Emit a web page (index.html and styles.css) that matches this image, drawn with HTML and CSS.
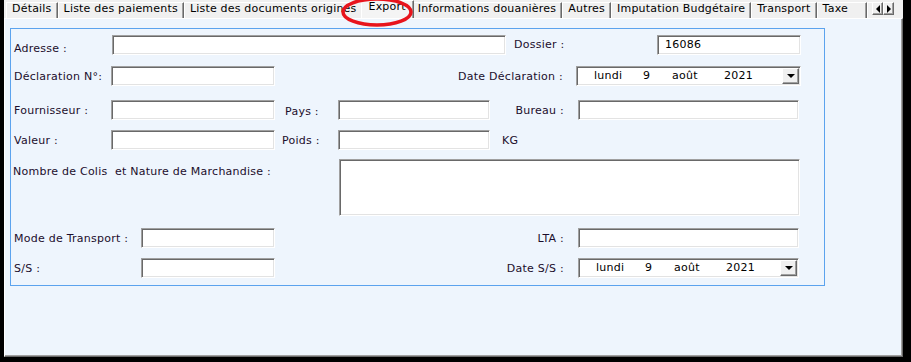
FILE: index.html
```html
<!DOCTYPE html>
<html lang="fr">
<head>
  <meta charset="UTF-8" />
  <title>Export</title>
  <link rel="stylesheet" href="styles.css">
</head>
<body>

  <div class="window">

    <div class="tabbar">
      <div class="tabs">
        <div class="tab">Détails</div>
        <div class="tab">Liste des paiements</div>
        <div class="tab">Liste des documents origines</div>
        <div class="tab active">Export</div>
        <div class="tab">Informations douanières</div>
        <div class="tab">Autres</div>
        <div class="tab">Imputation Budgétaire</div>
        <div class="tab">Transport</div>
        <div class="tab wide">Taxe</div>
        <div class="tab stub"></div>
      </div>
      <div class="scroller">
        <span class="arrow-btn"><span class="tri-left"></span></span>
        <span class="arrow-btn"><span class="tri-right"></span></span>
      </div>
      <!-- red annotation round the Export tab -->
      <svg class="mark" width="84" height="30" viewBox="0 0 84 30">
        <ellipse cx="39" cy="12" rx="34" ry="13" fill="none" stroke="#e8141c" stroke-width="3.5"/>
      </svg>
    </div>

    <div class="panel">
      <div class="group">

        <div class="row">
          <span class="lbl lbl-first lbl-low">Adresse :</span>
          <div class="field f-adresse"></div>
          <span class="lbl lbl-dossier">Dossier :</span>
          <div class="field f-dossier">16086</div>
        </div>

        <div class="row row-2">
          <span class="lbl lbl-first">Déclaration N°:</span>
          <div class="field f-short"></div>
          <span class="lbl lbl-right lbl-date">Date Déclaration :</span>
          <div class="field date date-wide">
            <span class="d-day">lundi</span>
            <span class="d-num">9</span>
            <span class="d-mon">août</span>
            <span>2021</span>
            <span class="drop"><span class="tri-down"></span></span>
          </div>
        </div>

        <div class="row row-3">
          <span class="lbl lbl-first">Fournisseur :</span>
          <div class="field f-short"></div>
          <span class="lbl lbl-pays">Pays :</span>
          <div class="field f-mid"></div>
          <span class="lbl lbl-right lbl-bureau">Bureau :</span>
          <div class="field f-long"></div>
        </div>

        <div class="row row-4">
          <span class="lbl lbl-first">Valeur :</span>
          <div class="field f-short"></div>
          <span class="lbl lbl-poids">Poids :</span>
          <div class="field f-mid"></div>
          <span class="lbl lbl-kg">KG</span>
        </div>

        <div class="row row-5">
          <span class="lbl lbl-colis">Nombre de Colis&nbsp; et Nature de Marchandise :</span>
          <div class="field f-area"></div>
        </div>

        <div class="row row-6">
          <span class="lbl lbl-mode">Mode de Transport :</span>
          <div class="field f-mode"></div>
          <span class="lbl lbl-right lbl-wide">LTA :</span>
          <div class="field f-long"></div>
        </div>

        <div class="row row-7">
          <span class="lbl lbl-mode">S/S :</span>
          <div class="field f-mode"></div>
          <span class="lbl lbl-right lbl-wide">Date S/S :</span>
          <div class="field date f-long">
            <span class="d-day">lundi</span>
            <span class="d-num">9</span>
            <span class="d-mon">août</span>
            <span>2021</span>
            <span class="drop"><span class="tri-down"></span></span>
          </div>
        </div>

      </div>
    </div>

  </div>

</body>
</html>
```

FILE: styles.css
```css
* {
  box-sizing: border-box;
}
html, body {
  margin: 0;
  padding: 0;
}
body {
  background-color: #000;
  font-family: "DejaVu Sans", Verdana, sans-serif;
  font-size: 11px;
  letter-spacing: 0.25px;
  color: #1c0e2c;
}
.window {
  width: 899px;
  height: 357px;
  margin-left: 4px;
  background-color: #f0f0f0;
  display: flex;
  flex-direction: column;
}

/* Tab strip */
.tabbar {
  position: relative;
  height: 18px;
  flex-shrink: 0;
  display: flex;
  align-items: flex-end;
}
.tabs {
  flex: 1;
  height: 18px;
  display: flex;
  align-items: flex-end;
  overflow: hidden;
  padding-left: 2px;
}
.tab {
  flex-shrink: 0;
  height: 16px;
  line-height: 12px;
  padding: 0 5px;
  border: 1px solid #fff;
  border-bottom: none;
  border-right-color: #696969;
  box-shadow: inset -1px 0 #a0a0a0;
  color: #000;
  letter-spacing: 0.2px;
  white-space: nowrap;
}
.tab.wide {
  padding-right: 18px;
}
.tab.stub {
  width: 40px;
}
.tab.active {
  position: relative;
  z-index: 1;
  height: 18px;
  line-height: 11px;
  margin: 0 -2px;
  padding: 0 7px;
  background-color: #f4f4f4;
}
.scroller {
  display: flex;
  align-self: flex-start;
  margin: 2px 9px 0 0;
}
.arrow-btn {
  width: 11px;
  height: 13px;
  background-color: #f0f0f0;
  border: 1px solid;
  border-color: #fff #696969 #696969 #fff;
  box-shadow: inset -1px -1px #a0a0a0;
  display: flex;
  align-items: center;
  justify-content: center;
}
.tri-left {
  border-right: 4px solid #000;
  border-top: 4px solid transparent;
  border-bottom: 4px solid transparent;
}
.tri-right {
  border-left: 4px solid #000;
  border-top: 4px solid transparent;
  border-bottom: 4px solid transparent;
}
.mark {
  position: absolute;
  left: 334px;
  top: 0;
  z-index: 5;
  overflow: visible;
}

/* Page */
.panel {
  flex: 1;
  background-color: #eef5fd;
  border: 1px solid;
  border-color: #fff #696969 #696969 #fff;
  box-shadow: inset -1px -1px #a0a0a0;
  padding: 9px 0 0 5px;
}
.group {
  width: 815px;
  height: 258px;
  border: 1px solid #5ba3ee;
  padding-top: 5px;
  display: flex;
  flex-direction: column;
}
.row {
  display: flex;
  align-items: center;
  min-height: 20px;
}
.row-2 { margin-top: 11px; }
.row-3 { margin-top: 14px; }
.row-4 { margin-top: 10px; }
.row-5 { margin-top: 9px; align-items: flex-start; }
.row-6 { margin-top: 12px; }
.row-7 { margin-top: 10px; }

.lbl {
  flex-shrink: 0;
  white-space: nowrap;
}
.lbl-first {
  width: 100px;
  padding-left: 3px;
}
.lbl-low {
  width: 101px;
  padding-top: 8px;
}
.lbl-mode {
  width: 130px;
  padding-left: 3px;
}
.lbl-colis {
  width: 328px;
  padding: 6px 0 0 2px;
}
.lbl-right {
  text-align: right;
  padding-right: 14px;
}
.lbl-dossier {
  width: 151px;
  padding-left: 8px;
}
.lbl-date {
  width: 301px;
  padding-right: 13px;
}
.lbl-pays {
  width: 63px;
  padding-left: 10px;
  padding-top: 2px;
}
.lbl-poids {
  width: 63px;
  padding-left: 7px;
}
.lbl-kg {
  padding-left: 12px;
}
.lbl-bureau {
  width: 88px;
}
.lbl-wide {
  width: 303px;
}

/* Sunken edit boxes */
.field {
  flex-shrink: 0;
  height: 20px;
  background-color: #fff;
  border: 1px solid;
  border-color: #a0a0a0 #fff #fff #a0a0a0;
  box-shadow: inset 1px 1px #696969, inset -1px -1px #e3e3e3;
  padding-left: 7px;
  line-height: 18px;
  color: #000;
}
.f-adresse { width: 394px; }
.f-dossier { width: 144px; }
.f-short { width: 164px; }
.f-mid { width: 152px; }
.f-long { width: 221px; }
.f-mode { width: 134px; }
.f-area {
  width: 461px;
  height: 57px;
}

/* Date pickers */
.date {
  display: flex;
  align-items: center;
  padding-left: 17px;
  padding-right: 1px;
}
.date-wide { width: 225px; }
.d-day { width: 49px; }
.d-num { width: 29px; }
.d-mon { width: 52px; }
.drop {
  margin-left: auto;
  width: 17px;
  height: 16px;
  background-color: #f0f0f0;
  border: 1px solid;
  border-color: #fff #696969 #696969 #fff;
  box-shadow: inset -1px -1px #a0a0a0;
  display: flex;
  align-items: center;
  justify-content: center;
}
.tri-down {
  border-top: 4px solid #000;
  border-left: 4px solid transparent;
  border-right: 4px solid transparent;
}
```
